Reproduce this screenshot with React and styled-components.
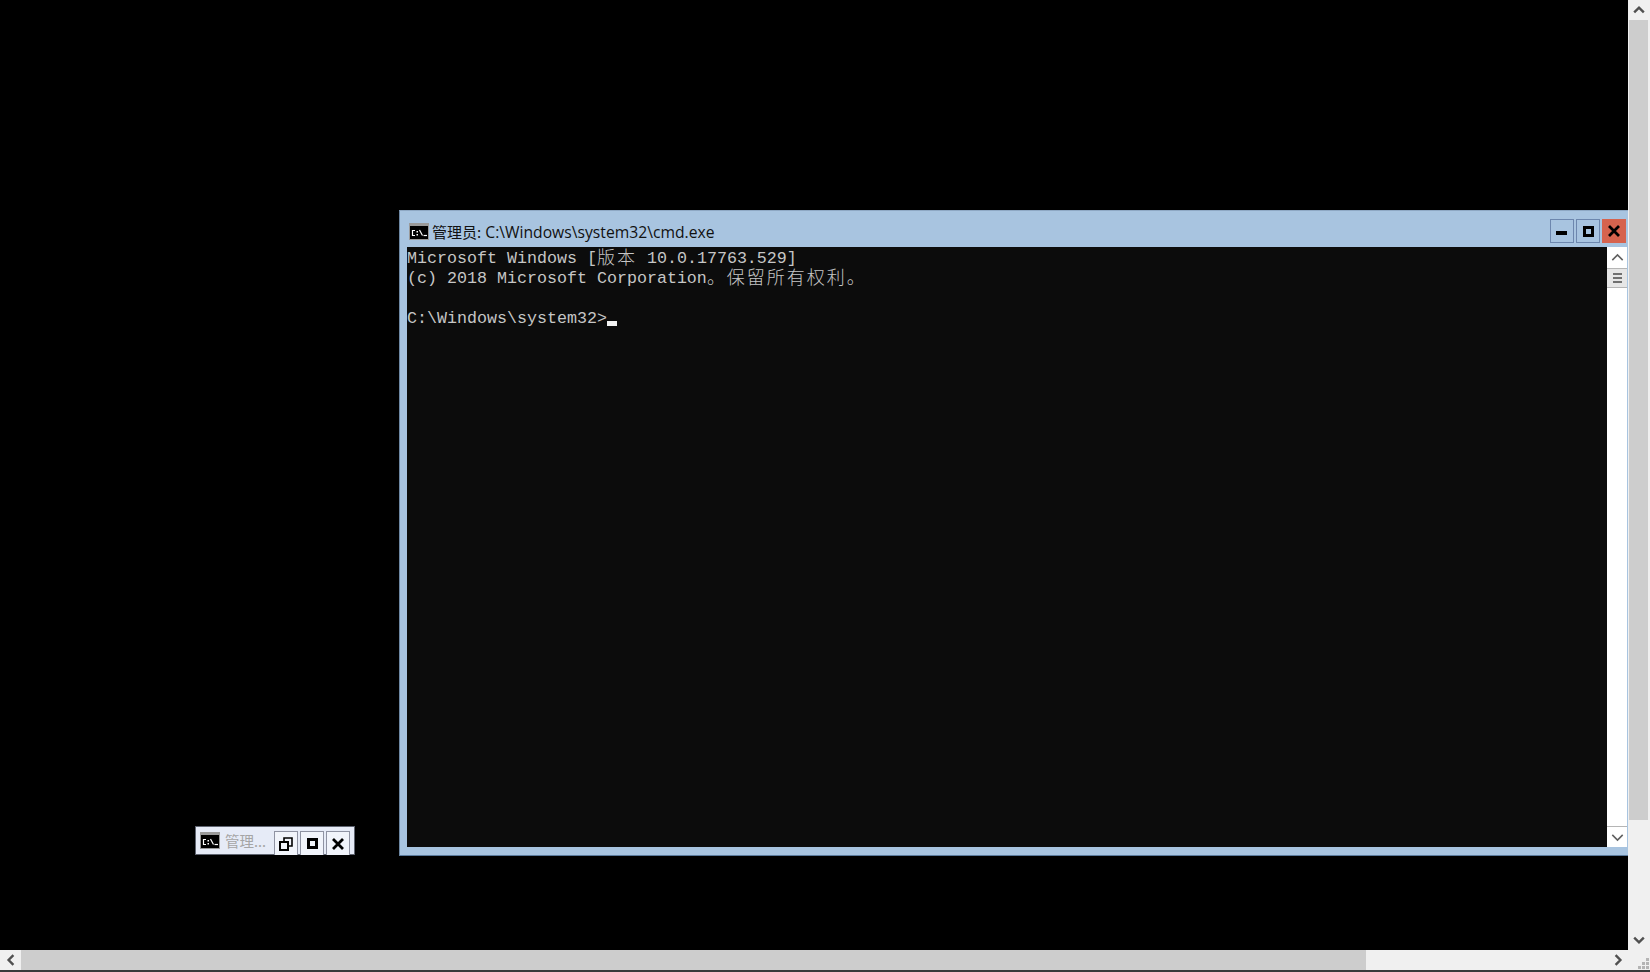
import styled, { createGlobalStyle } from "styled-components";

const GlobalStyle = createGlobalStyle`
    html, body {
        margin: 0;
        padding: 0;
        width: 100%;
        height: 100%;
        overflow: hidden;
        background: #000;
    }
    #root {
        height: 100%;
    }
`;

const cjk = `"Noto Sans CJK SC", sans-serif`;

function CmdIcon({ size = 20 }) {
    return (
        <IconSvg width={size} height={size * 0.85} viewBox="0 0 20 17">
            <rect width="20" height="17" fill="#9a9a9a" />
            <rect x="1" y="3" width="18" height="13" fill="#000" />
            <path d="M6 7.5 H3.5 V12.5 H6" fill="none" stroke="#fff" strokeWidth="1.2" />
            <rect x="7.5" y="8" width="1.5" height="1.5" fill="#fff" />
            <rect x="7.5" y="11" width="1.5" height="1.5" fill="#fff" />
            <path d="M10.5 7 L13.5 12.5" stroke="#fff" strokeWidth="1.2" fill="none" />
            <path d="M14.5 12.5 H18" stroke="#fff" strokeWidth="1.2" />
        </IconSvg>
    );
}

function Minimize() {
    return (
        <svg width="12" height="12" viewBox="0 0 12 12">
            <rect x="0" y="6" width="11" height="4" fill="#000" />
        </svg>
    );
}

function Maximize() {
    return (
        <svg width="11" height="11" viewBox="0 0 11 11">
            <path d="M1.5 1.5 H9.5 V9.5 H1.5 Z" fill="none" stroke="#000" strokeWidth="3" />
        </svg>
    );
}

function Restore() {
    return (
        <svg width="14" height="14" viewBox="0 0 14 14">
            <path d="M1 5 H9 V13 H1 Z" fill="none" stroke="#000" strokeWidth="2" />
            <path d="M5 4 V1 H13 V9 H10" fill="none" stroke="#000" strokeWidth="1.6" />
        </svg>
    );
}

function Close() {
    return (
        <svg width="12" height="12" viewBox="0 0 12 12">
            <path d="M1 1 L11 11 M11 1 L1 11" stroke="#000" strokeWidth="2.8" />
        </svg>
    );
}

function Chevron({ dir = "up", color = "#606060", width = 1.2, size = 10 }) {
    const paths = {
        up: "M1 7 L5 3 L9 7",
        down: "M1 3 L5 7 L9 3",
        left: "M7 1 L3 5 L7 9",
        right: "M3 1 L7 5 L3 9",
    };
    return (
        <svg width={size} height={size} viewBox="0 0 10 10">
            <path d={paths[dir]} fill="none" stroke={color} strokeWidth={width} />
        </svg>
    );
}

export default function App() {
    return (
        <>
            <GlobalStyle />
            <Page>
                <Desktop>
                    <MiniWindow>
                        <CmdIcon size={20} />
                        <MiniTitle>管理...</MiniTitle>
                        <MiniButtons>
                            <MiniButton><Restore /></MiniButton>
                            <MiniButton><Maximize /></MiniButton>
                            <MiniButton><Close /></MiniButton>
                        </MiniButtons>
                    </MiniWindow>
                    <Window>
                        <TitleBar>
                            <CmdIcon size={20} />
                            <Title>
                                <TitleCjk>管理员:</TitleCjk> C:\Windows\system32\cmd.exe
                            </Title>
                            <Controls>
                                <ControlButton><Minimize /></ControlButton>
                                <ControlButton><Maximize /></ControlButton>
                                <ControlButton $close><Close /></ControlButton>
                            </Controls>
                        </TitleBar>
                        <Client>
                            <Console>
                                <Line>Microsoft Windows [<Wide>版本</Wide> 10.0.17763.529]</Line>
                                <Line>(c) 2018 Microsoft Corporation<Wide>。保留所有权利。</Wide></Line>
                                <Line>&nbsp;</Line>
                                <Line>C:\Windows\system32&gt;<Cursor /></Line>
                            </Console>
                            <ConsoleScroll>
                                <ConsoleArrow><Chevron dir="up" size={13} /></ConsoleArrow>
                                <ConsoleThumb>
                                    <Grip /><Grip /><Grip />
                                </ConsoleThumb>
                                <ConsoleTrack />
                                <ConsoleArrow $bottom><Chevron dir="down" size={13} /></ConsoleArrow>
                            </ConsoleScroll>
                        </Client>
                    </Window>
                </Desktop>
                <VerticalBar>
                    <BarArrow $tall><Chevron dir="up" width={2} size={12} color="#505050" /></BarArrow>
                    <VerticalThumb />
                    <VerticalTrack />
                    <BarArrow $tall><Chevron dir="down" width={2} size={12} color="#505050" /></BarArrow>
                </VerticalBar>
                <HorizontalBar>
                    <BarArrow><Chevron dir="left" width={2} size={12} color="#505050" /></BarArrow>
                    <HorizontalThumb />
                    <HorizontalTrack />
                    <BarArrow><Chevron dir="right" width={2} size={12} color="#505050" /></BarArrow>
                </HorizontalBar>
                <Corner>
                    <svg width="12" height="12" viewBox="0 0 12 12" fill="#b4b4b4">
                        <rect x="8" y="0" width="3" height="3" />
                        <rect x="4" y="4" width="3" height="3" />
                        <rect x="8" y="4" width="3" height="3" />
                        <rect x="0" y="8" width="3" height="3" />
                        <rect x="4" y="8" width="3" height="3" />
                        <rect x="8" y="8" width="3" height="3" />
                    </svg>
                </Corner>
                <BottomEdge />
            </Page>
        </>
    );
}

const Page = styled.div`
    width: 1650px;
    height: 972px;
    display: grid;
    grid-template-columns: 1628px 22px;
    grid-template-rows: 950px 20px 2px;
    background: #000;
`;

const Desktop = styled.div`
    position: relative;
    background: #000;
    overflow: hidden;
`;

const IconSvg = styled.svg`
    flex: none;
    display: block;
`;

const MiniWindow = styled.div`
    position: absolute;
    left: 195px;
    top: 826px;
    width: 160px;
    height: 29px;
    box-sizing: border-box;
    display: flex;
    align-items: center;
    padding-left: 4px;
    background: #e6ebf7;
    border: 1px solid #5f6470;
`;

const MiniTitle = styled.span`
    margin-left: 5px;
    font: 14.5px ${cjk};
    color: #a5a5a5;
    white-space: nowrap;
`;

const MiniButtons = styled.div`
    margin-left: auto;
    margin-right: 4px;
    margin-bottom: -1px;
    display: flex;
    gap: 2px;
    align-self: flex-end;
`;

const MiniButton = styled.div`
    width: 24px;
    height: 24px;
    box-sizing: border-box;
    display: flex;
    align-items: center;
    justify-content: center;
    background: #f1f4fb;
    border: 1px solid #8f93a3;
    border-bottom: none;
`;

const Window = styled.div`
    position: absolute;
    left: 399px;
    top: 210px;
    width: 1229px;
    height: 646px;
    box-sizing: border-box;
    display: flex;
    flex-direction: column;
    background: #a8c4e0;
    border-left: 1px solid #6d87a3;
    border-top: 1px solid #8ea8c4;
    border-bottom: 1px solid #5a7a9c;
`;

const TitleBar = styled.div`
    height: 36px;
    flex: none;
    display: flex;
    align-items: center;
    padding: 4px 2px 0 9px;
    box-sizing: border-box;
`;

const Title = styled.div`
    margin: 2px 0 0 3px;
    font: 15.7px "Open Sans", ${cjk};
    color: #111;
    white-space: nowrap;
`;

const TitleCjk = styled.span`
    font-family: ${cjk};
    font-size: 15px;
`;

const Controls = styled.div`
    margin-left: auto;
    display: flex;
    gap: 2px;
`;

const ControlButton = styled.div`
    width: 24px;
    height: 24px;
    box-sizing: border-box;
    display: flex;
    align-items: center;
    justify-content: center;
    background: ${(p) => (p.$close ? "#d6634e" : "#a8c4e0")};
    border: 1px solid ${(p) => (p.$close ? "#d6634e" : "#6d87ae")};
`;

const Client = styled.div`
    margin-left: 7px;
    height: 600px;
    display: flex;
`;

const Console = styled.div`
    flex: 1;
    background: #0c0c0c;
    color: #c6c6c6;
    font: 16.67px/20px "Liberation Mono", monospace;
    white-space: pre;
    padding-top: 2px;
`;

const Line = styled.div`
    height: 20px;
`;

const Wide = styled.span`
    font-family: ${cjk};
    font-size: 18px;
    letter-spacing: 2px;
    font-weight: 300;
    line-height: 0;
    vertical-align: -1px;
`;

const Cursor = styled.span`
    display: inline-block;
    width: 10px;
    height: 5px;
    background: #f2f2f2;
    vertical-align: -3px;
`;

const ConsoleScroll = styled.div`
    width: 20px;
    flex: none;
    display: flex;
    flex-direction: column;
    background: #fff;
    border-right: 1px solid #a8c4e0;
`;

const ConsoleArrow = styled.div`
    height: 21px;
    flex: none;
    box-sizing: border-box;
    display: flex;
    align-items: center;
    justify-content: center;
    border-top: ${(p) => (p.$bottom ? "1px solid #b5b5b5" : "none")};
`;

const ConsoleThumb = styled.div`
    height: 20px;
    flex: none;
    box-sizing: border-box;
    display: flex;
    flex-direction: column;
    align-items: center;
    justify-content: center;
    gap: 2px;
    background: #e6e6e6;
    border: 1px solid #b5b5b5;
    border-left: none;
    border-right: none;
`;

const Grip = styled.div`
    width: 9px;
    height: 2px;
    background: #707070;
`;

const ConsoleTrack = styled.div`
    flex: 1;
`;

const VerticalBar = styled.div`
    display: flex;
    flex-direction: column;
    background: #f0f0f0;
`;

const VerticalThumb = styled.div`
    height: 800px;
    margin: 0 2px 0 1px;
    background: #cdcdcd;
`;

const VerticalTrack = styled.div`
    flex: 1;
`;

const BarArrow = styled.div`
    height: ${(p) => (p.$tall ? "20px" : "100%")};
    width: ${(p) => (p.$tall ? "100%" : "21px")};
    flex: none;
    display: flex;
    align-items: center;
    justify-content: center;
`;

const HorizontalBar = styled.div`
    display: flex;
    background: #f0f0f0;
`;

const HorizontalThumb = styled.div`
    width: 1345px;
    background: #cdcdcd;
`;

const HorizontalTrack = styled.div`
    flex: 1;
`;

const Corner = styled.div`
    background: #f0f0f0;
    display: flex;
    align-items: flex-end;
    justify-content: flex-end;
`;

const BottomEdge = styled.div`
    grid-column: 1 / -1;
    background: #3a3a3a;
`;
